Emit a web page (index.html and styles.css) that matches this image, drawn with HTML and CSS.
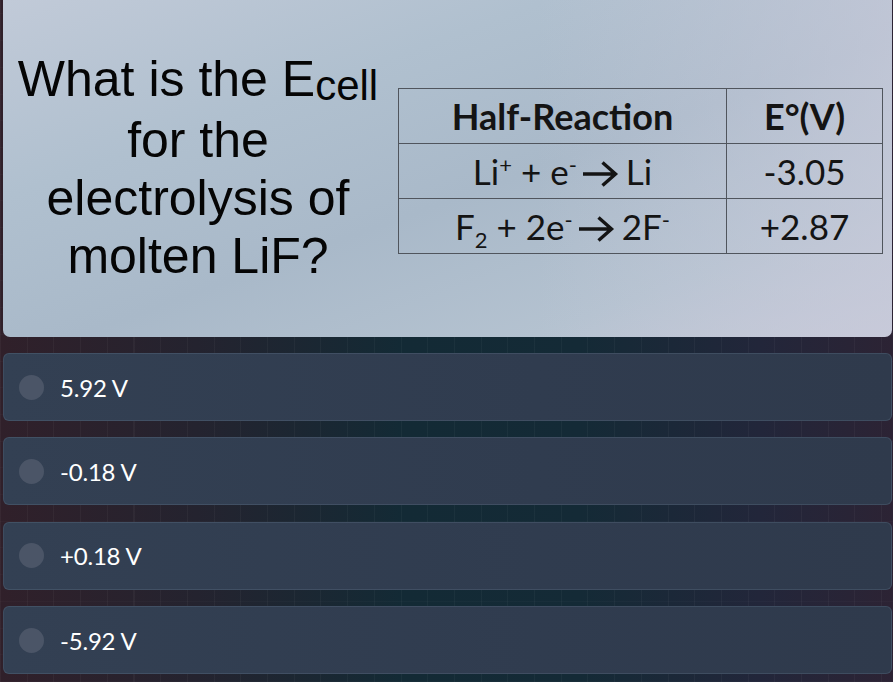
FILE: index.html
```html
<!DOCTYPE html>
<html>
<head>
<meta charset="utf-8">
<link rel="stylesheet" href="styles.css">
</head>
<body>
<div class="page">
  <div class="question-card">
    <div class="question">What is the E<span class="sub-cell">cell</span><br>for the<br>electrolysis of<br>molten LiF?</div>
    <table class="reactions">
      <tr>
        <th class="col-reaction">Half-Reaction</th>
        <th class="col-value">E°(V)</th>
      </tr>
      <tr>
        <td>Li<sup class="sup">+</sup> + e<sup class="sup">-</sup><svg class="arrow" viewBox="0 0 40 28" width="40" height="28"><path d="M3 14 H35 M22.5 2.5 L35.5 14 L22.5 25.5" fill="none" stroke="#141414" stroke-width="3.4"/></svg>Li</td>
        <td>-3.05</td>
      </tr>
      <tr>
        <td>F<sub class="sub">2</sub> + 2e<sup class="sup">-</sup><svg class="arrow" viewBox="0 0 40 28" width="40" height="28"><path d="M3 14 H35 M22.5 2.5 L35.5 14 L22.5 25.5" fill="none" stroke="#141414" stroke-width="3.4"/></svg>2F<sup class="sup">-</sup></td>
        <td>+2.87</td>
      </tr>
    </table>
  </div>
  <div class="options">
    <div class="option"><span class="dot"></span><span class="label">5.92 V</span></div>
    <div class="option"><span class="dot"></span><span class="label">-0.18 V</span></div>
    <div class="option"><span class="dot"></span><span class="label">+0.18 V</span></div>
    <div class="option"><span class="dot"></span><span class="label">-5.92 V</span></div>
  </div>
</div>
</body>
</html>
```
FILE: styles.css
```css
html, body {
  margin: 0;
  padding: 0;
}
body {
  width: 893px;
  height: 682px;
  overflow: hidden;
  background:
    repeating-linear-gradient(90deg, rgba(255,255,255,0.035) 0 1px, transparent 1px 26.7px),
    repeating-linear-gradient(0deg, rgba(255,255,255,0.02) 0 1px, transparent 1px 26.7px),
    linear-gradient(90deg, #30202a 0%, #24232f 22%, #132a35 45%, #142a36 65%, #22263a 85%, #2c2334 100%);
  font-family: "Lato", "Liberation Sans", sans-serif;
}
.page {
  padding: 0 1px 0 3px;
  display: flex;
  flex-direction: column;
  gap: 16px;
}
.question-card {
  height: 337px;
  border-radius: 0 0 7px 7px;
  background:
    linear-gradient(90deg, rgba(190,200,215,0) 0%, rgba(185,196,212,0) 60%, rgba(200,202,218,0.7) 100%),
    linear-gradient(160deg, #c1cad8 0%, #b0c0cf 30%, #a9b9c9 55%, #b4c2d0 80%, #c6c9d8 100%);
  display: flex;
  align-items: center;
}
.question {
  width: 390px;
  flex: none;
  text-align: center;
  font-family: "Liberation Sans", Arial, sans-serif;
  font-size: 50px;
  line-height: 58px;
  color: #050505;
  margin-top: -2px;
}
.sub-cell {
  font-size: 42px;
  position: relative;
  top: 4px;
}
.reactions {
  margin-left: 5px;
  margin-top: 4px;
  border-collapse: collapse;
  font-family: "Lato", sans-serif;
  color: #141414;
}
.reactions th, .reactions td {
  border: 1px solid #50555d;
  text-align: center;
  padding: 0;
  height: 54px;
  white-space: nowrap;
}
.reactions th {
  font-weight: 700;
  font-size: 36px;
}
.reactions td {
  font-size: 35px;
}
.col-reaction { width: 327px; }
.col-value { width: 155px; }
.sup {
  font-size: 22px;
  vertical-align: 12px;
  line-height: 0;
}
.sub {
  font-size: 22px;
  vertical-align: -8px;
  line-height: 0;
}
.arrow {
  vertical-align: -3px;
  margin: 0 6px 0 3px;
}
.options {
  display: flex;
  flex-direction: column;
  gap: 16.4px;
}
.option {
  height: 68px;
  box-sizing: border-box;
  border: 1px solid rgba(120,140,165,0.22);
  border-radius: 6px;
  background: linear-gradient(90deg, #334053 0%, #303c4f 60%, #2f3a4c 100%);
  display: flex;
  align-items: center;
  padding-left: 15px;
  gap: 16px;
}
.dot {
  width: 25px;
  height: 25px;
  border-radius: 50%;
  background: #4b5567;
  flex: none;
}
.label {
  color: #ffffff;
  font-size: 24px;
  letter-spacing: -0.2px;
}
```
